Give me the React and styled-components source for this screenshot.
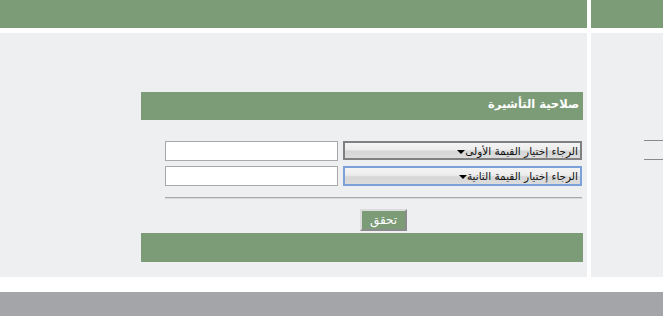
import React from "react";
import styled, { createGlobalStyle } from "styled-components";

const GlobalStyle = createGlobalStyle`
	html, body {
		margin: 0;
		padding: 0;
		background: #ffffff;
		font-family: "DejaVu Sans", "Noto Sans", sans-serif;
	}
`;

const App = () => {
	return (
		<>
			<GlobalStyle />
			<Page>
				<Layout>
					<TopBar />
					<TopBar />
					<LeftPanel>
						<Box>
							<HeaderBar>صلاحية التأشيرة</HeaderBar>
							<Form>
								<Row>
									<TextInput type="text" />
									<Select>
										<span>الرجاء إختيار القيمة الأولى</span>
										<Arrow />
									</Select>
								</Row>
								<Row>
									<TextInput type="text" />
									<Select focused>
										<span>الرجاء إختيار القيمة الثانية</span>
										<Arrow />
									</Select>
								</Row>
								<Separator />
								<ButtonRow>
									<Button>تحقق</Button>
								</ButtonRow>
							</Form>
							<FooterBar />
						</Box>
					</LeftPanel>
					<RightPanel>
						<Line />
						<Line />
					</RightPanel>
				</Layout>
				<BottomBar />
			</Page>
		</>
	);
};

const Page = styled.div`
	display: flex;
	flex-direction: column;
	width: 663px;
	height: 316px;
	overflow: hidden;
`;

const Layout = styled.div`
	display: grid;
	grid-template-columns: 587px 1fr;
	grid-template-rows: 28px 244px;
	column-gap: 4px;
	row-gap: 5px;
`;

const TopBar = styled.div`
	background: #7c9c78;
`;

const LeftPanel = styled.div`
	background: #eeeff1;
	padding: 59px 4px 0 141px;
`;

const Box = styled.div`
	display: flex;
	flex-direction: column;
	width: 442px;
`;

const HeaderBar = styled.div`
	height: 28px;
	background: #7c9c78;
	color: #ffffff;
	font-size: 11.5px;
	font-weight: bold;
	direction: rtl;
	text-align: right;
	line-height: 24px;
	padding-right: 4px;
`;

const Form = styled.div`
	display: flex;
	flex-direction: column;
	padding: 21px 1px 2px 24px;
`;

const Row = styled.div`
	display: flex;
	gap: 5px;
	margin-bottom: 5px;
	direction: ltr;
`;

const TextInput = styled.input`
	width: 173px;
	height: 20px;
	box-sizing: border-box;
	border: 1px solid #a8a8a8;
	background: #ffffff;
	padding: 0 3px;
	margin: 0;
	outline: none;
`;

const Select = styled.div`
	display: flex;
	align-items: center;
	flex-direction: row-reverse;
	justify-content: flex-start;
	width: 239px;
	height: ${(p) => (p.focused ? "20px" : "19px")};
	box-sizing: border-box;
	border: 2px solid ${(p) => (p.focused ? "#7ba2d8" : "#808080")};
	background: linear-gradient(#f4f4f4 0%, #ececec 45%, #d6d6d6 55%, #dcdcdc 100%);
	padding-right: 2px;
	font-size: 10.5px;
	color: #111111;
	direction: ltr;
	white-space: nowrap;

	span {
		direction: rtl;
	}
`;

const Arrow = styled.i`
	width: 0;
	height: 0;
	margin-top: 2px;
	border-left: 4px solid transparent;
	border-right: 4px solid transparent;
	border-top: 4px solid #000000;
`;

const Separator = styled.div`
	height: 1px;
	background: #a9a9a9;
	margin-top: 6px;
	border-bottom: 1px solid #d8d8d8;
`;

const ButtonRow = styled.div`
	display: flex;
	padding: 10px 0 0 195px;
`;

const Button = styled.button`
	width: 47px;
	height: 22px;
	box-sizing: border-box;
	background: #7c9c78;
	color: #ffffff;
	font-family: "DejaVu Sans", sans-serif;
	font-size: 12px;
	padding: 0;
	border: 2px solid;
	border-color: #dcdcdc #8c8c8c #8c8c8c #dcdcdc;
	cursor: pointer;
`;

const FooterBar = styled.div`
	height: 29px;
	background: #7c9c78;
`;

const RightPanel = styled.div`
	display: flex;
	flex-direction: column;
	align-items: flex-end;
	gap: 18px;
	background: #eeeff1;
	padding-top: 107px;
`;

const Line = styled.div`
	width: 19px;
	height: 1px;
	background: #8a8a8a;
`;

const BottomBar = styled.div`
	margin-top: 15px;
	height: 24px;
	background: #a4a5a9;
`;

export default App;
